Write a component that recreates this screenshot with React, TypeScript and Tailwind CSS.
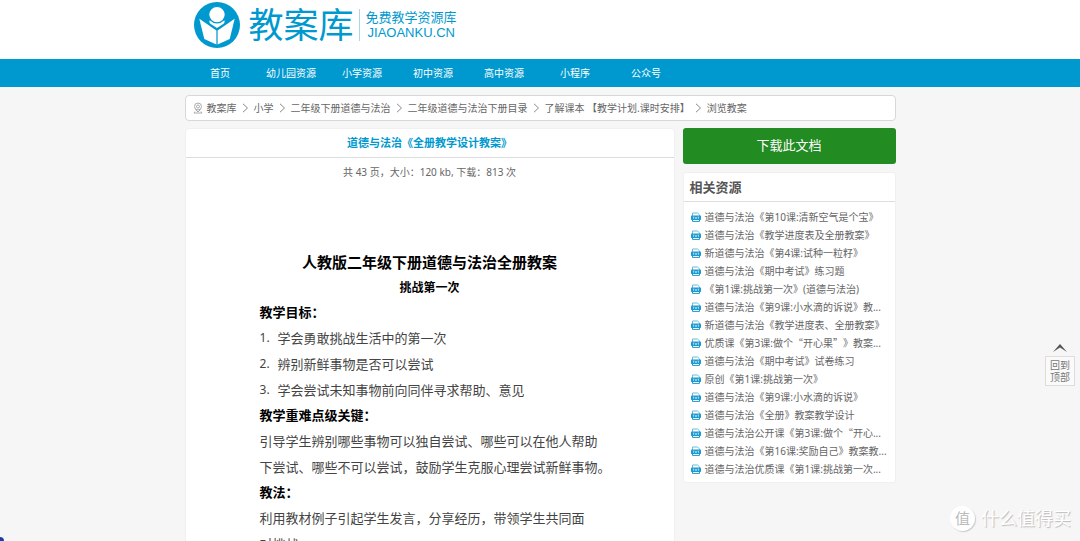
const navItems = [
  "首页",
  "幼儿园资源",
  "小学资源",
  "初中资源",
  "高中资源",
  "小程序",
  "公众号",
];

const breadcrumbs = [
  "教案库",
  "小学",
  "二年级下册道德与法治",
  "二年级道德与法治下册目录",
  "了解课本 【教学计划.课时安排】",
  "浏览教案",
];

const related = [
  "道德与法治《第10课:清新空气是个宝》",
  "道德与法治《教学进度表及全册教案》",
  "新道德与法治《第4课:试种一粒籽》",
  "道德与法治《期中考试》练习题",
  "《第1课:挑战第一次》(道德与法治)",
  "道德与法治《第9课:小水滴的诉说》教...",
  "新道德与法治《教学进度表、全册教案》",
  "优质课《第3课:做个“开心果”》教案...",
  "道德与法治《期中考试》试卷练习",
  "原创《第1课:挑战第一次》",
  "道德与法治《第9课:小水滴的诉说》",
  "道德与法治《全册》教案教学设计",
  "道德与法治公开课《第3课:做个“开心...",
  "道德与法治《第16课:奖励自己》教案教...",
  "道德与法治优质课《第1课:挑战第一次...",
];

const goals = [
  "学会勇敢挑战生活中的第一次",
  "辨别新鲜事物是否可以尝试",
  "学会尝试未知事物前向同伴寻求帮助、意见",
];

function LogoMark() {
  return (
    <svg viewBox="0 0 46 46" className="size-[46px] shrink-0" aria-hidden="true">
      <circle cx="23" cy="23" r="23" fill="#0099cf" />
      <path d="M15.500 18.500l3.500 0.500 4 2 4-2 3.500-0.500c0.500 2-0.500 3.500-2.500 4.300L23 26l-5-3.200c-2-0.800-3-2.300-2.500-4.300z" fill="#fff" />
      <circle cx="23" cy="12.600" r="8.300" fill="#fff" stroke="#0099cf" strokeWidth="1.200" />
      <path d="M5.300 16.800L22.400 28.500v14L10.300 37z" fill="#fff" />
      <path d="M40.700 16.800L23.600 28.500v14L35.700 37z" fill="#fff" />
    </svg>
  );
}

function PinIcon() {
  return (
    <svg
      viewBox="0 0 10 12"
      className="mr-1 h-3 w-[10px] shrink-0"
      fill="none"
      stroke="#aaa"
      strokeWidth="1"
      aria-hidden="true"
    >
      <circle cx="5" cy="4.500" r="3.500" />
      <circle cx="5" cy="4.500" r="1.500" />
      <path d="M2.500 7.500L5 10l2.500-2.500M2 9.500l-1 1.500h8L8 9.500" />
    </svg>
  );
}

function Chevron() {
  return (
    <svg
      viewBox="0 0 6 10"
      className="mx-[5px] h-[10px] w-[7px] shrink-0"
      fill="none"
      stroke="#888"
      aria-hidden="true"
    >
      <path d="M0.500 0.800L5 5 0.500 9.200" />
    </svg>
  );
}

function TxtIcon() {
  return (
    <svg viewBox="0 0 10 10" className="size-[10px] shrink-0" aria-hidden="true">
      <path d="M1.500 4V1h5l2 1.800V4" fill="none" stroke="#58b4da" strokeWidth="0.900" />
      <rect x="0" y="3.600" width="10" height="4.400" rx="0.800" fill="#1b98cd" />
      <path d="M1.500 7.500v1.900h7V7.500" fill="none" stroke="#1b98cd" strokeWidth="1" />
      <path
        d="M1.800 5h1.600M2.600 5v2M4.200 5l1.600 2M5.800 5L4.200 7M6.600 5h1.600M7.400 5v2"
        stroke="#fff"
        strokeWidth="0.500"
      />
    </svg>
  );
}

// Curly quotes take a full-width cell in Chinese text
function FullWidthQuotes({ text }: { text: string }) {
  return (
    <span className="[text-spacing-trim:space-all]">
      {text.split(/([“”])/).map((part, i) =>
        part === "“" || part === "”" ? (
          <span key={i} className="font-['Noto_Sans_CJK_SC',sans-serif] leading-none">
            {part}
          </span>
        ) : (
          part
        ),
      )}
    </span>
  );
}

function Header() {
  return (
    <header className="bg-white">
      <div className="mx-auto flex h-[59px] w-full max-w-[711px] items-start pt-[2px] pl-[9px] text-[#0099cf]">
        <a href="#home" className="flex items-center">
          <LogoMark />
          <span className="ml-[9px] text-[35px] leading-[46px]">教案库</span>
          <span className="ml-[5px] flex h-8 flex-col justify-center border-l border-[#a8d8ea] pl-[6px] text-[13px] leading-4">
            <span>免费教学资源库</span>
            <span className="pl-[2px] font-['Liberation_Sans',sans-serif]">JIAOANKU.CN</span>
          </span>
        </a>
      </div>
      <nav className="bg-[#0099cf]">
        <ul className="mx-auto flex w-full max-w-[711px]">
          {navItems.map((item) => (
            <li key={item} className="w-[71px] shrink-0 text-center">
              <a href="#nav" className="block leading-7 whitespace-nowrap text-white">
                {item}
              </a>
            </li>
          ))}
        </ul>
      </nav>
    </header>
  );
}

function Document() {
  return (
    <main className="min-w-0 flex-1 rounded-t-sm border border-[#f0f0f0] bg-white">
      <h1 className="border-b border-[#ddd] text-center text-[11px] leading-7 font-bold text-[#0099cf]">
        道德与法治《全册教学设计教案》
      </h1>
      <p className="text-center leading-7 text-[#666]">共 43 页，大小：120 kb, 下载：813 次</p>
      <article className="px-[74px] pt-[62px] text-[13px] text-[#444]">
        <h2 className="text-center text-[15px] leading-7 font-bold whitespace-nowrap text-black">
          人教版二年级下册道德与法治全册教案
        </h2>
        <h3 className="text-center text-[12px] leading-6 font-bold text-black">挑战第一次</h3>
        <h4 className="leading-[25px] font-bold text-black">教学目标：</h4>
        <ol className="leading-[26px]">
          {goals.map((goal, i) => (
            <li key={goal} className="flex whitespace-nowrap">
              <span className="w-[18px] text-[12px]">{i + 1}.</span>
              {goal}
            </li>
          ))}
        </ol>
        <h4 className="leading-[25px] font-bold text-black">教学重难点级关键：</h4>
        <p className="leading-[26px] whitespace-nowrap">
          引导学生辨别哪些事物可以独自尝试、哪些可以在他人帮助
          <br />
          下尝试、哪些不可以尝试，鼓励学生克服心理尝试新鲜事物。
        </p>
        <h4 className="leading-[25px] font-bold text-black">教法：</h4>
        <p className="leading-[26px] whitespace-nowrap">
          利用教材例子引起学生发言，分享经历，带领学生共同面
          <br />
          对挑战。
        </p>
      </article>
    </main>
  );
}

function Sidebar() {
  return (
    <aside className="w-[213px] shrink-0">
      <button
        type="button"
        className="block h-9 w-full rounded-[3px] bg-[#228b22] text-[13px] text-white"
      >
        下载此文档
      </button>
      <section className="mt-2 rounded-[3px] border border-[#f0f0f0] bg-white">
        <h2 className="border-b border-[#ddd] px-[6px] text-[13px] leading-7 font-bold text-[#555]">
          相关资源
        </h2>
        <ul className="px-[7px] pt-[6px] pb-1">
          {related.map((title) => (
            <li key={title} className="leading-[18px]">
              <a href="#doc" className="flex h-[18px] items-center gap-1 whitespace-nowrap text-[#666]">
                <TxtIcon />
                <FullWidthQuotes text={title} />
              </a>
            </li>
          ))}
        </ul>
      </section>
    </aside>
  );
}

export default function App() {
  return (
    <div className="relative h-screen overflow-hidden bg-[#f6f6f6] font-['Noto_Sans','Noto_Sans_CJK_SC',sans-serif] text-[10px]">
      <Header />
      <div className="mx-auto w-full max-w-[711px] pt-2">
        <nav
          aria-label="breadcrumb"
          className="flex h-[26px] items-center rounded-sm border border-[#d8d8d8] bg-white pl-[7px] whitespace-nowrap text-[#666]"
        >
          <PinIcon />
          {breadcrumbs.map((crumb, i) => (
            <span key={crumb} className="flex items-center">
              {i > 0 && <Chevron />}
              <a href="#crumb">{crumb}</a>
            </span>
          ))}
        </nav>
        <div className="mt-[7px] flex items-start gap-2">
          <Document />
          <Sidebar />
        </div>
      </div>

      {/* Back to top */}
      <a
        href="#top"
        className="absolute right-[5px] bottom-[155px] flex flex-col items-center gap-1 text-center leading-3 text-[#777]"
      >
        <svg viewBox="0 0 14 8" className="h-2 w-[14px]" fill="#555" aria-hidden="true">
          <path d="M7 0l7 8-7-4.500L0 8z" />
        </svg>
        <span className="border border-[#ddd] bg-[#fafafa] px-1 py-[2px]">
          回到
          <br />
          顶部
        </span>
      </a>

      {/* Watermark */}
      <div className="absolute right-[9px] bottom-[10px] flex items-center gap-[6px] text-[18px] leading-[26px] text-white [text-shadow:1px_1px_1px_#bbb]">
        <span className="flex size-[25px] items-center justify-center rounded-full bg-white text-[15px] text-[#bbb] shadow-[1px_1px_1px_#ccc] [text-shadow:none]">
          值
        </span>
        <span>什么值得买</span>
      </div>

      <div className="absolute bottom-0 left-0 size-1 rounded-tr-full bg-[#1f3f9f]" />
    </div>
  );
}
